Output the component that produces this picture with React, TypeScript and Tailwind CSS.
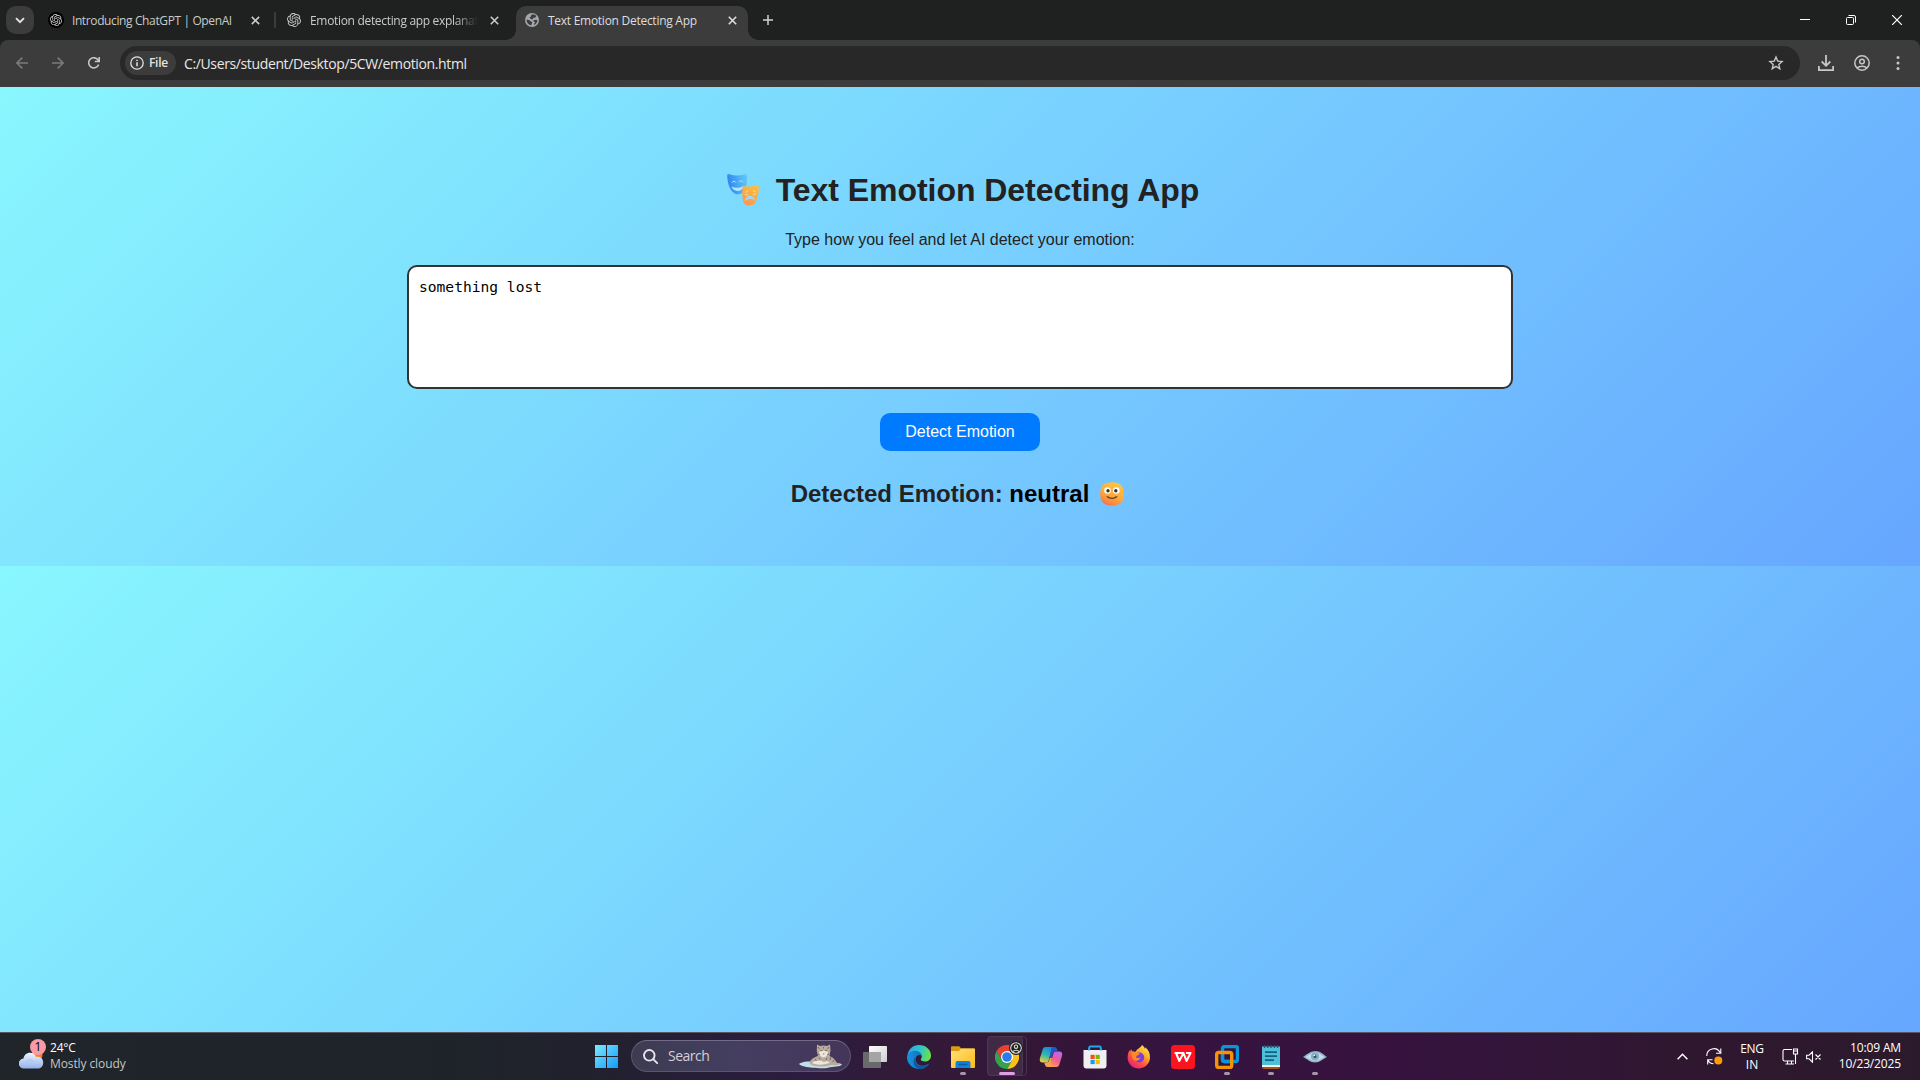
import React from "react";
import { SiOpenai } from "react-icons/si";

const UI = "font-['Open_Sans','Noto_Sans',sans-serif]";

function CloseX({ className = "" }: { className?: string }) {
  return (
    <svg width="9" height="9" viewBox="0 0 9 9" className={className} stroke="currentColor" strokeWidth="1.6" fill="none">
      <path d="M.8.8l7.4 7.4M8.2.8L.8 8.2" />
    </svg>
  );
}

function TabStrip() {
  return (
    <div className="flex h-10 items-start bg-[#1f2120] text-[12px] text-[#c9cbca]">
      <div className="ml-1.5 mt-1.5 flex size-7 items-center justify-center rounded-[10px] bg-[#3c3c3c] text-[#e3e3e3]">
        <svg width="10" height="7" viewBox="0 0 10 7" fill="none" stroke="currentColor" strokeWidth="1.9">
          <path d="M1 1.2l4 4 4-4" />
        </svg>
      </div>
      <div className="ml-[14px] flex h-10 w-[228px] items-center">
        <span className="flex size-4 items-center justify-center rounded-full bg-black text-[#d0d0d0]">
          <SiOpenai size={12} />
        </span>
        <span className="ml-2 w-[167px] whitespace-nowrap pt-0.5 tracking-[-0.38px]">Introducing ChatGPT | OpenAI</span>
        <CloseX className="ml-[13px]" />
        <span className="ml-[14px] h-4 w-0.5 shrink-0 rounded bg-[#3c3c3c]" />
      </div>
      <div className="flex h-10 w-[230px] items-center pl-[11px]">
        <SiOpenai size={14} />
        <span className="ml-[9px] w-[168px] whitespace-nowrap pt-0.5 tracking-[-0.32px] [mask-image:linear-gradient(to_right,black_145px,transparent_168px)]">
          Emotion detecting app explanat
        </span>
        <CloseX className="ml-3" />
      </div>
      <div className="relative ml-[10px] mt-1.5 flex h-[34px] w-[232px] items-center rounded-t-[10px] bg-[#3c3c3c] pb-1.5 text-[#dedede]">
        <span className="absolute -left-2.5 bottom-0 size-2.5 bg-[radial-gradient(circle_at_0_0,transparent_9.5px,#3c3c3c_10px)]" />
        <span className="absolute -right-2.5 bottom-0 size-2.5 bg-[radial-gradient(circle_at_100%_0,transparent_9.5px,#3c3c3c_10px)]" />
        <svg className="ml-[9px]" width="14" height="14" viewBox="0 0 14 14">
          <circle cx="7" cy="7" r="7" fill="#a2a7ad" />
          <path d="M6.300 1.900C8 1.200 10 1.700 11.300 3L10.500 4.500 8.500 4.700 7.800 6.200H6L5.200 5.300 4.300 4.200 5.800 3.800zM1.600 6.500L4.500 7.300 6 8.500 7.300 9.300 6.300 12.300C3.500 12 1.500 9.500 1.600 6.500zM8.500 7.300L11 6.800 12.400 7.300C12.300 9.300 11 11.300 9 12.100L9.300 10.300 10.300 9.200 8.600 8.600z" fill="#3c3c3c" />
        </svg>
        <span className="ml-[9px] w-[168px] whitespace-nowrap pt-0.5 tracking-[-0.27px]">Text Emotion Detecting App</span>
        <CloseX className="ml-3" />
      </div>
      <svg className="ml-[15px] mt-[15px]" width="10" height="10" viewBox="0 0 10 10" stroke="#d0d0d0" strokeWidth="1.500">
        <path d="M5 0v10M0 5h10" />
      </svg>
      <div className="ml-auto mr-[18px] mt-[15px] flex items-start text-white">
        <svg width="10" height="10" viewBox="0 0 10 10" fill="currentColor">
          <path d="M0 4h10v1H0z" />
        </svg>
        <svg className="ml-9" width="10" height="10" viewBox="0 0 10 10" fill="none" stroke="currentColor">
          <rect x=".5" y="2.500" width="7" height="7" rx="1" />
          <path d="M2.500.5H8Q9.500.5 9.500 2v5.500" />
        </svg>
        <svg className="ml-9" width="10" height="10" viewBox="0 0 10 10" stroke="currentColor" strokeWidth="1.200">
          <path d="M0 0l10 10M10 0L0 10" />
        </svg>
      </div>
    </div>
  );
}

function Toolbar() {
  return (
    <div className="h-[47px] bg-[#1f2120]">
      <div className="flex h-full items-center rounded-t-[8px] bg-[#3c3c3c] pb-px text-[#c7c7c7]">
        <svg className="ml-4 text-[#7b7b7b]" width="12" height="12" viewBox="0 0 12 12" fill="none" stroke="currentColor" strokeWidth="1.500">
          <path d="M12 6H1M6.300.6L.9 6l5.400 5.400" />
        </svg>
        <svg className="ml-6 text-[#7b7b7b]" width="12" height="12" viewBox="0 0 12 12" fill="none" stroke="currentColor" strokeWidth="1.500">
          <path d="M0 6h11M5.700.6L11.100 6l-5.400 5.400" />
        </svg>
        <svg className="ml-6" width="12" height="12" viewBox="0 0 12 12" fill="none" stroke="currentColor" strokeWidth="1.600">
          <path d="M10.600 7.400A5.100 5.100 0 1 1 9.800 2.700L11 4.200M11.200 0v4.500H6.800" />
        </svg>
        <div className="ml-5 flex h-[34px] w-[1680px] items-center rounded-full bg-[#282828] pl-[5px]">
          <div className="flex h-6 w-[51px] items-center rounded-full bg-[#3c3c3c] pl-[5px] text-[12px] font-semibold text-[#e3e3e3]">
            <svg width="14" height="14" viewBox="0 0 14 14" fill="none" stroke="currentColor" strokeWidth="1.300">
              <circle cx="7" cy="7" r="6.200" />
              <path d="M7 6.300v4M7 3.700v1.400" strokeWidth="1.500" />
            </svg>
            <span className="ml-[5px] tracking-[-0.3px]">File</span>
          </div>
          <span className="ml-2 whitespace-nowrap text-[14px] tracking-[-0.37px] text-[#e8e8e8]">C:/Users/student/Desktop/5CW/emotion.html</span>
          <svg className="ml-auto mr-4" width="16" height="16" viewBox="0 0 16 16" fill="none" stroke="currentColor" strokeWidth="1.400" strokeLinejoin="miter">
            <path d="M8 2l1.700 4.100 4.400.4-3.300 2.900 1 4.300L8 11.400l-3.800 2.300 1-4.300L1.900 6.500l4.400-.4z" />
          </svg>
        </div>
        <svg className="ml-[18px]" width="16" height="16" viewBox="0 0 16 16" fill="none" stroke="currentColor" strokeWidth="1.800">
          <path d="M8 0v10.500M3.700 6.500L8 10.800l4.300-4.300M.9 11v4.100h14.200V11" />
        </svg>
        <svg className="ml-5" width="16" height="16" viewBox="0 0 16 16" fill="none" stroke="currentColor" strokeWidth="1.500">
          <circle cx="8" cy="8" r="7.200" />
          <circle cx="8" cy="6.500" r="2.300" />
          <path d="M3 13c2.500-2.500 7.500-2.500 10 0" />
        </svg>
        <svg className="ml-[26px]" width="4" height="16" viewBox="0 0 4 16" fill="currentColor">
          <circle cx="2" cy="2.500" r="1.500" />
          <circle cx="2" cy="8" r="1.500" />
          <circle cx="2" cy="13.500" r="1.500" />
        </svg>
      </div>
    </div>
  );
}

function Masks() {
  return (
    <svg width="32" height="32" viewBox="0 0 32 32">
      <defs>
        <linearGradient id="mk1" x1="0" x2="1" y1=".3" y2=".1">
          <stop stopColor="#2f86ee" />
          <stop offset="1" stopColor="#62cdfb" />
        </linearGradient>
        <linearGradient id="mk2" x1=".2" x2=".7" y1="1" y2="0">
          <stop stopColor="#fb9550" />
          <stop offset="1" stopColor="#fcbd42" />
        </linearGradient>
      </defs>
      <path d="M.2 1.500C.2.300 1.200 0 2.500.3c5 1.600 10.500 1.600 15.500 0C19.500 0 20 .500 20.100 2 20.500 11 19 19.500 10.500 20.500 2.500 18.500.5 9 .2 1.500z" fill="url(#mk1)" />
      <path d="M5 8.800c.8-2 3-2 3.800-.2M12 8.300c.6-2 3-2 3.800 0" fill="none" stroke="#b9e6ff" />
      <path d="M4.500 12.500c3.500 1.800 8 1.800 12-.6-.8 3.500-3 5-5.800 5-3 0-5.200-1.500-6.200-4.400z" fill="#b5e5ff" />
      <path d="M15.500 14c0-1.500.5-2.300 2-2 4 1 7.500.8 12-.8 1.800-.5 2.500.1 2.400 1.500-.3 5-1 11-3.500 15.500-1.500 3.500-8.500 4.500-11 1.500-2.500-3.500-2.200-10-1.900-15.700z" fill="url(#mk2)" />
      <path d="M17.800 27.500c.8-7.500 9-7.800 10.400-.6-2.500-3-7.500-3-10.400.6z" fill="#9bdaff" />
      <path d="M17.800 20.300c1 .8 2.300.7 3.400 0M25.500 20c1.200.7 2.500.6 3.600-.4M18.500 18.300c1.200-.2 2-.8 2.600-1.600M28.500 17.800c-1-.2-2-.6-2.500-1.400" fill="none" stroke="#ffe0a0" />
    </svg>
  );
}

function Smiley() {
  return (
    <svg width="24" height="24" viewBox="0 0 24 24">
      <defs>
        <linearGradient id="sm" x1=".75" x2=".3" y1="0" y2="1">
          <stop stopColor="#ffc83d" />
          <stop offset=".6" stopColor="#fda63d" />
          <stop offset=".88" stopColor="#f9863d" />
          <stop offset="1" stopColor="#f5628a" />
        </linearGradient>
      </defs>
      <path d="M12 .2C20.500.2 23.800 4 23.800 12c0 8-3.800 11.600-11.800 11.600S.2 20 .2 12C.2 4 3.500.2 12 .2z" fill="url(#sm)" />
      <circle cx="7.500" cy="8.500" r="3.300" fill="#fff" />
      <circle cx="16.300" cy="8.500" r="3.300" fill="#fff" />
      <circle cx="8" cy="8.700" r="1.700" fill="#3d3028" />
      <circle cx="15.800" cy="8.700" r="1.700" fill="#3d3028" />
      <path d="M7.300 14.800c2.500 2.200 7 2.200 9.400 0" fill="none" stroke="#5f3b2c" strokeWidth="1.300" strokeLinecap="round" />
    </svg>
  );
}

function Page() {
  return (
    <main className="h-[945px] bg-[linear-gradient(135deg,#89f7fe,#66a6ff)] bg-[length:1920px_479px] bg-repeat-y font-['Liberation_Sans',Arial,sans-serif] text-[#222]">
      <div className="flex flex-col items-center pt-[85px]">
        <h1 className="flex h-9 items-center whitespace-nowrap pl-[6px] text-[32px] font-bold leading-9">
          <Masks />
          <span className="ml-[17px] tracking-[-0.05px]">Text Emotion Detecting App</span>
        </h1>
        <p className="mt-[23px] text-base leading-[18px]">Type how you feel and let AI detect your emotion:</p>
        <div className="mt-4 h-[124px] w-[1106px] rounded-[10px] border-2 border-[#333] bg-white px-2.5 py-2.5 font-['DejaVu_Sans_Mono',monospace] text-[14.6px] leading-[19px] text-black">
          something lost
        </div>
        <button className="mt-6 h-[38px] w-40 rounded-[10px] bg-[#007bff] text-base leading-[18px] text-white">Detect Emotion</button>
        <h2 className="mt-[29px] flex h-7 items-center whitespace-nowrap pr-[5px] text-2xl font-bold leading-7">
          <span>
            Detected Emotion: <span className="text-black">neutral</span>
          </span>
          <span className="ml-[11px]">
            <Smiley />
          </span>
        </h2>
      </div>
    </main>
  );
}

function AppSlot({ children, running }: { children: React.ReactNode; running?: boolean }) {
  return (
    <div className="relative flex h-full w-11 items-center justify-center">
      {children}
      {running && <span className="absolute bottom-[5px] h-[3px] w-1.5 rounded-full bg-[#a596aa]" />}
    </div>
  );
}

function Edge() {
  return (
    <svg width="24" height="24" viewBox="0 0 24 24">
      <defs>
        <linearGradient id="ed1" x1="0" x2="1" y1=".3" y2=".5">
          <stop stopColor="#2aa8e8" />
          <stop offset=".5" stopColor="#2cc4cf" />
          <stop offset="1" stopColor="#6ee33f" />
        </linearGradient>
        <linearGradient id="ed2" x1="0" x2="1">
          <stop stopColor="#1795e0" />
          <stop offset="1" stopColor="#0c5ca8" />
        </linearGradient>
      </defs>
      <path d="M.5 10C1.500 4 6 0 12 0c7 0 12 5 12 10.500 0 4-3 6-6 6-2.500 0-4.200-1-4.200-2 0-.8 1-1.300 1-3C14.800 8.500 11 6.500 7.500 7 3.500 7.300 1 9 .5 10z" fill="url(#ed1)" />
      <path d="M.1 11.500C.5 8 4 5.700 8 5.700c4 0 6.800 2.800 6.800 5.500-1.500-2-5-1.500-6 1.300-1.300 4 2 8.500 6.700 8.300 3-.1 5-1.200 6.800-2.300C20.500 22 16.500 24 12 24 5 24-.5 18 .1 11.500z" fill="url(#ed2)" />
      <path d="M8.700 12.500C7 17 10.500 22 16 20.800c2.500-.5 4.700-1.500 6.300-2.300C20.300 22 16.500 24 12.500 24 7 22.500 4.500 15.500 8.700 12.500z" fill="#0d579f" />
    </svg>
  );
}

function Folder() {
  return (
    <svg width="24" height="24" viewBox="0 0 24 24">
      <defs>
        <linearGradient id="fo" x1="0" x2="1" y2="1">
          <stop stopColor="#ffe07a" />
          <stop offset="1" stopColor="#ffbb19" />
        </linearGradient>
      </defs>
      <path d="M0 2.500C0 1.600.5 1.300 1.200 1.300h7l2 2.200H23q1 0 1 1V8H0z" fill="#dd9b13" />
      <path d="M0 6h8l2.200-2.400H23q1 0 1 1V22q0 1-1 1H1q-1 0-1-1z" fill="url(#fo)" />
      <path d="M4.500 23v-5q0-2 2-2h11q2 0 2 2v5z" fill="#1282d8" />
      <path d="M7.500 19.500h9" stroke="#0a5ba6" strokeWidth="1.500" />
    </svg>
  );
}

function Chrome() {
  return (
    <svg width="24" height="24" viewBox="0 0 24 24">
      <path d="M12 6h10.400A12 12 0 0 1 12 24l5.200-9z" fill="#fbc117" />
      <path d="M12 6H22.400A12 12 0 0 0 1.600 6l5.200 9z" fill="#e94235" />
      <path d="M17.200 15L12 24A12 12 0 0 1 1.600 6l5.200 9z" fill="#34a350" />
      <circle cx="12" cy="12" r="6" fill="#fff" />
      <circle cx="12" cy="12" r="4.800" fill="#2a7cec" />
    </svg>
  );
}

function Copilot() {
  return (
    <svg width="24" height="22" viewBox="0 0 24 22">
      <defs>
        <linearGradient id="cp1" x1=".5" x2=".2" y2="1">
          <stop stopColor="#168de0" />
          <stop offset=".5" stopColor="#37b7a5" />
          <stop offset="1" stopColor="#f2d13a" />
        </linearGradient>
        <linearGradient id="cp2" x1=".8" x2=".3" y2="1">
          <stop stopColor="#b56af0" />
          <stop offset=".5" stopColor="#ef5c95" />
          <stop offset="1" stopColor="#ff9b55" />
        </linearGradient>
      </defs>
      <path d="M6.500 1H15l-2.300 3L9.500 15q-.5 1.500-2 1.500H4C1 16.500.3 14.500 1 12L3.500 4Q4.200 1 6.500 1z" fill="url(#cp1)" />
      <path d="M17.500 21H9l2.300-3L14.500 7q.5-1.500 2-1.500H20c3 0 3.700 2 3 4.500L20.500 18q-.7 3-3 3z" fill="url(#cp2)" />
      <path d="M12.500 1h3c1.500 0 2 .8 2.500 2l.8 2.500h-2.300c-1.500 0-2.200.8-2.600 2L12.500 12H10.300L12 4z" fill="#2356c8" />
      <path d="M11.500 21h-3c-1.500 0-2-.8-2.500-2l-.8-2.500h2.300c1.500 0 2.200-.8 2.600-2L10.800 12H13l-1 5z" fill="#f3a44c" />
    </svg>
  );
}

function Store() {
  return (
    <svg width="24" height="24" viewBox="0 0 24 24">
      <path d="M6.200 6.500V2.500q0-1 1-1h9.600q1 0 1 1v4" fill="none" stroke="#25a5ea" strokeWidth="1.800" />
      <path d="M.5 5h23v15.500q0 3-3 3h-17q-3 0-3-3z" fill="#f0f0f2" />
      <path d="M6.200 5.500V3M17.800 5.500V3" stroke="#25a5ea" strokeWidth="1.800" />
      <path d="M7.500 9.800h4.200V14H7.500z" fill="#f05023" />
      <path d="M12.600 9.800h4.200V14h-4.200z" fill="#7db902" />
      <path d="M7.500 14.900h4.200v4.200H7.500z" fill="#06a4ee" />
      <path d="M12.600 14.900h4.200v4.200h-4.200z" fill="#fdb803" />
    </svg>
  );
}

function Firefox() {
  return (
    <svg width="24" height="24" viewBox="0 0 24 24">
      <defs>
        <linearGradient id="ff" x1=".85" x2=".2" y1="0" y2=".9">
          <stop stopColor="#fff14a" />
          <stop offset=".4" stopColor="#ffa42a" />
          <stop offset=".7" stopColor="#ff4f45" />
          <stop offset="1" stopColor="#e8266f" />
        </linearGradient>
      </defs>
      <path d="M15 0c1.500.8 2.300 2.500 3 4 .3-1 .2-1.500 0-2 3.500 2.500 5.200 6.500 5 10.800-.3 6-5 10.700-11.300 10.700C5.500 23.500.6 18.700.6 12.500c0-3.500 1.200-6 2-7.500l.3 2L4 4.300l1.500 2.200c1.300-.3 2 0 3 .3C10 3.500 14 3 15 0z" fill="url(#ff)" />
      <circle cx="12.200" cy="12.500" r="5" fill="#7a3fd6" />
      <path d="M5 7c1.500-.6 3 0 4 .5 1.500.2 3 .5 3.500 1.200-.5 1.500-2.500 1.500-3 2.300-.3.700 0 1.500-.3 2 1.500.5 2.800-.8 4.300-.2-1 2.500-3.500 3.700-5.500 2.700C5 14.500 4 10 5 7z" fill="#ff8a2a" />
    </svg>
  );
}

function Taskbar() {
  return (
    <footer className="relative flex h-12 border-t border-[#5a5560] bg-[linear-gradient(90deg,#1f2529_0px,#1e2429_420px,#22212f_600px,#2c1c40_800px,#331a38_900px,#341638_1050px,#361440_1180px,#37123f_1340px,#33143a_1500px,#2f172f_1680px,#2b1a2c_1920px)] text-[12px] leading-4 text-white">
      <div className="flex w-[584px] items-center">
        <div className="relative ml-[19px] h-8 w-7">
          <svg className="absolute left-0 top-1" width="25" height="24" viewBox="0 0 25 24">
            <defs>
              <linearGradient id="cl" x2="0" y2="1">
                <stop stopColor="#eef4ff" />
                <stop offset="1" stopColor="#94b2ea" />
              </linearGradient>
            </defs>
            <circle cx="18" cy="10" r="5.500" fill="#f58220" />
            <path d="M5 23.500a5 5 0 0 1-.5-10C5 10 7.500 7.700 11 7.700c3 0 5.300 1.600 6.200 4.200 4-.8 7 1.700 7 5.600 0 3.500-2 6-5.200 6z" fill="url(#cl)" />
            <path d="M7 17.500c1.500-3 6-3.500 7.800-.5" stroke="#a9c0ea" fill="none" />
          </svg>
          <span className="absolute left-[11px] top-[-2px] flex size-4 items-center justify-center rounded-full bg-[#fb9aa2] text-[12px] text-black">1</span>
        </div>
        <div className="ml-[3px] pb-0.5">
          <div className="tracking-[-0.2px]">24°C</div>
          <div className="tracking-[-0.1px] text-[#c3c5c7]">Mostly cloudy</div>
        </div>
      </div>
      <AppSlot>
        <svg width="23" height="23" viewBox="0 0 23 23">
          <defs>
            <linearGradient id="wn" x2="1" y2="1">
              <stop stopColor="#7de8ff" />
              <stop offset="1" stopColor="#129bfa" />
            </linearGradient>
          </defs>
          <path d="M0 0h11v11H0zM12 0h11v11H12zM0 12h11v11H0zM12 12h11v11H12z" fill="url(#wn)" />
        </svg>
      </AppSlot>
      <div className="ml-[3px] mr-0.5 mt-[7px] flex h-8 w-[220px] items-center rounded-full border border-[#5c5572] border-t-[#736a88] bg-[linear-gradient(90deg,#3d3c52,#443e60_50%,#44365a)]">
        <svg className="ml-[11px]" width="15" height="15" viewBox="0 0 15 15" fill="none" stroke="#e6e4ea" strokeWidth="1.900">
          <circle cx="6.300" cy="6.300" r="5.300" />
          <path d="M10.200 10.200l4 4" strokeLinecap="round" />
        </svg>
        <span className="ml-2.5 text-[14px] tracking-[-0.5px] text-[#d2cfd8]">Search</span>
        <svg className="ml-auto mr-[7px]" width="44" height="26" viewBox="0 0 44 26">
          <path d="M0 21c3-2.500 12-3 20-2.500 9 .5 21 1 23 3-2 2.500-9 2-14 3.200-5 1.300-11 .2-15 0C8 24 2 23.500 0 21z" fill="#bfdfec" />
          <path d="M11 21c-1-3 2-6 8-8L17.800 8 18 1.500l3 1.500c2.500-.8 5-.8 7 0l3-1.500.5 6L30.500 13c4 1.500 6 4 7 6.500l4 1.500c-2 1.500-6 1.500-9 1-6 2-16.500 2.500-21.500-1z" fill="#b9aa9e" />
          <path d="M20 9c3-2 6-2 9 0-.5 3-2 5.500-4.500 5.500S20.500 12 20 9zM13 20c4-3 8-3 12-1 2-1 4-1 6 .5-5 2.500-13 3-18 .5z" fill="#eee4da" />
          <path d="M21.500 7.500h2M26 7.500h2M19 4l1.500 2M30 4l-1.500 2M16 16l1.500 2M32 14l-1 3M35 17l-1.500 2M20 14.500l1 2M28 15l-1 2M24.500 4v1.500M19 11l1.500.5M30 11l-1.500.5" stroke="#6c6461" strokeWidth=".9" />
          <path d="M23.700 10.500h2l-1 1.300z" fill="#c55a55" />
        </svg>
      </div>
      <AppSlot>
        <svg width="24" height="24" viewBox="0 0 24 24">
          <defs>
            <linearGradient id="tv" x2="1" y2="1">
              <stop stopColor="#fff" />
              <stop offset="1" stopColor="#cfced0" />
            </linearGradient>
          </defs>
          <rect x="6" y="1" width="18" height="16" rx=".8" fill="url(#tv)" />
          <rect x="0" y="7" width="18" height="16" rx=".8" fill="#6a696b" />
          <path d="M6 7h12v10H6z" fill="#a5a4a6" />
        </svg>
      </AppSlot>
      <AppSlot><Edge /></AppSlot>
      <AppSlot running><Folder /></AppSlot>
      <AppSlot>
        <span className="absolute left-[2px] top-[3px] h-10 w-10 rounded-[4px] border border-[#49344e]" />
        <span className="absolute left-[2px] top-[3px] h-10 w-9 rounded-[4px] border border-[#4d3852] bg-[#402a45]" />
        <span className="relative">
          <Chrome />
          <svg className="absolute -top-1 left-[14px]" width="14" height="14" viewBox="0 0 14 14" fill="none" stroke="#dcdcdc" strokeWidth="1.100">
            <circle cx="7" cy="7" r="6.400" fill="#202020" stroke="#202020" />
            <circle cx="7" cy="7" r="5.300" />
            <circle cx="7" cy="5.700" r="1.700" />
            <path d="M3.700 10.800c1.700-2 5-2 6.600 0" />
          </svg>
        </span>
        <span className="absolute bottom-[5px] left-[14px] h-[3px] w-4 rounded-full bg-[#dda0e2]" />
      </AppSlot>
      <AppSlot><Copilot /></AppSlot>
      <AppSlot><Store /></AppSlot>
      <AppSlot><Firefox /></AppSlot>
      <AppSlot>
        <svg width="24" height="24" viewBox="0 0 24 24">
          <rect width="24" height="24" rx="3.500" fill="#fb1420" />
          <path d="M3.500 8h9.500M5 8l3.300 8L12.500 8l3 8L19.500 8h-4.500" fill="none" stroke="#fff" strokeWidth="2" strokeLinejoin="round" />
        </svg>
      </AppSlot>
      <AppSlot running>
        <svg width="24" height="24" viewBox="0 0 24 24" fill="none" strokeWidth="3">
          <rect x="7.500" y="1.500" width="15" height="15" rx="2" stroke="#0b95d8" strokeWidth="3.400" />
          <rect x="1.700" y="7.500" width="15" height="15" rx="2" stroke="#f59208" strokeWidth="3.400" />
          <path d="M7.500 10v4.500q0 2 2 2H14" stroke="#0b95d8" strokeWidth="3.400" />
        </svg>
      </AppSlot>
      <AppSlot running>
        <svg width="18" height="24" viewBox="0 0 18 24">
          <path d="M0 20h18v2q0 2-2 2H2q-2 0-2-2z" fill="#a2551b" />
          <path d="M0 19h18v3H0z" fill="#f7efe6" />
          <path d="M0 1.500h18V20H0z" fill="#4dbfd8" />
          <path d="M2.500 0v3M5.800 0v3M9 0v3M12.300 0v3M15.500 0v3" stroke="#175a72" strokeWidth="1.300" />
          <path d="M3 7.200h12M3 11.200h12M3 15.200h9" stroke="#11647f" strokeWidth="1.700" />
        </svg>
      </AppSlot>
      <AppSlot running>
        <svg width="24" height="14" viewBox="0 0 24 14">
          <path d="M0 7C4 4 8 1 12.500 1S20 4 24 7c-4 2-7 5.500-12 5.500S4 9 0 7z" fill="#8db4cb" />
          <path d="M2.500 7C6 4.500 9 2.500 12 2.500S18 4.500 21.500 7c-3.500 2-6 4-9.500 4S6 9 2.500 7z" fill="#c3dce6" />
          <circle cx="12" cy="6.500" r="4" fill="#86aebf" />
          <circle cx="12" cy="6.500" r="1.500" fill="#2b5264" />
          <circle cx="11.300" cy="5.500" r=".8" fill="#fff" />
        </svg>
      </AppSlot>
      <div className="ml-auto mr-[19px] flex items-center text-white">
        <svg width="11" height="7" viewBox="0 0 11 7" fill="none" stroke="currentColor" strokeWidth="1.500">
          <path d="M.6 6.200l4.900-5 4.900 5" />
        </svg>
        <svg className="ml-[18px]" width="17" height="17" viewBox="0 0 17 17" fill="none" stroke="currentColor" strokeWidth="1.100">
          <path d="M.8 8A7 7 0 0 1 14 4.500M14.800.5v4.800H10M6.500 11.700H1.700v4.800M1.900 12C3 14.500 5 15.700 7.500 15.700" />
          <circle cx="12.300" cy="12.500" r="4" fill="#ff9a0a" stroke="none" />
        </svg>
        <div className="ml-[14px] w-[30px] text-center">
          <div className="tracking-[-0.3px]">ENG</div>
          <div>IN</div>
        </div>
        <svg className="ml-[15px]" width="17" height="17" viewBox="0 0 17 17" fill="none" stroke="currentColor" strokeWidth="1.100">
          <path d="M10 1.500H2.500Q1 1.500 1 3v8.500Q1 13 2.500 13H12M5.500 13v3M3.500 16h8.500M11.500 1h4v5h-4zM13.500 6v10M11.500 3h4M9.500 13v3" />
        </svg>
        <svg className="ml-[7px]" width="16" height="12" viewBox="0 0 16 12" fill="none" stroke="currentColor" strokeWidth="1.100">
          <path d="M.6 4.200h2.500L6.500.8v10.400L3.100 7.800H.6zM9.500 3.500l5 5M14.500 3.500l-5 5" />
        </svg>
        <div className="ml-[15px] flex w-16 flex-col items-end whitespace-nowrap pb-0.5 tracking-[-0.14px]">
          <div>10:09 AM</div>
          <div>10/23/2025</div>
        </div>
      </div>
    </footer>
  );
}

export default function App() {
  return (
    <div className={`h-[1080px] w-[1920px] overflow-hidden ${UI}`}>
      <TabStrip />
      <Toolbar />
      <Page />
      <Taskbar />
    </div>
  );
}
